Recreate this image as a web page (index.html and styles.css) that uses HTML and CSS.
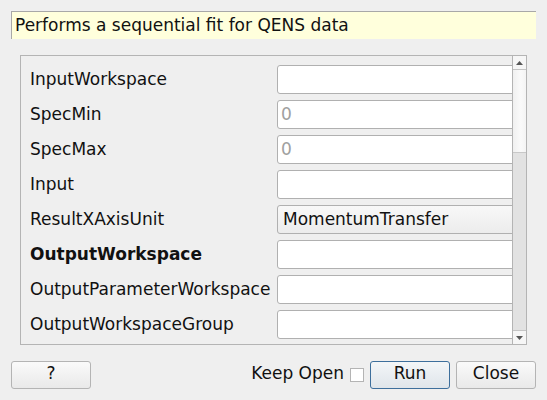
FILE: index.html
```html
<!DOCTYPE html>
<html>
<head>
<meta charset="utf-8">
<link rel="stylesheet" href="styles.css">
</head>
<body>
<div class="dialog">
  <div class="desc">Performs a sequential fit for QENS data</div>
  <div class="panel">
    <div class="rows">
      <div class="row"><span class="label">InputWorkspace</span><div class="field"></div></div>
      <div class="row"><span class="label">SpecMin</span><div class="field ph">0</div></div>
      <div class="row"><span class="label">SpecMax</span><div class="field ph">0</div></div>
      <div class="row"><span class="label">Input</span><div class="field"></div></div>
      <div class="row"><span class="label">ResultXAxisUnit</span><div class="field combo">MomentumTransfer</div></div>
      <div class="row"><span class="label bold">OutputWorkspace</span><div class="field"></div></div>
      <div class="row"><span class="label">OutputParameterWorkspace</span><div class="field"></div></div>
      <div class="row"><span class="label">OutputWorkspaceGroup</span><div class="field"></div></div>
    </div>
    <div class="scrollbar">
      <div class="arrow up"><svg width="7" height="4" viewBox="0 0 7 4"><polygon points="0,4 7,4 3.5,0" fill="#555"/></svg></div>
      <div class="handle"></div>
      <div class="trough"></div>
      <div class="arrow down"><svg width="7" height="4" viewBox="0 0 7 4"><polygon points="0,0 7,0 3.5,4" fill="#555"/></svg></div>
    </div>
  </div>
  <div class="buttons">
    <div class="btn">?</div>
    <div class="spacer"></div>
    <span class="keep">Keep Open</span>
    <div class="check"></div>
    <div class="btn default">Run</div>
    <div class="btn">Close</div>
  </div>
</div>
</body>
</html>
```
FILE: styles.css
```css
html, body {
  margin: 0;
  padding: 0;
  background: #efefef;
}
body {
  font-family: "DejaVu Sans", sans-serif;
  font-size: 17px;
  color: #111111;
  width: 547px;
  height: 400px;
  overflow: hidden;
}
.dialog {
  display: flex;
  flex-direction: column;
  padding: 11px 11px 0 11px;
}
.desc {
  height: 27px;
  line-height: 27px;
  padding-left: 3px;
  border-top: 1px solid #a8a8a8;
  border-left: 1px solid #a8a8a8;
  background: #ffffdc;
}
.panel {
  margin: 16px 9px 0 9px;
  height: 288px;
  border: 1px solid #b4b4b4;
  display: flex;
}
.rows {
  flex: 1;
  overflow: hidden;
  padding: 9px 0 0 9px;
  display: flex;
  flex-direction: column;
  gap: 7px;
}
.row {
  display: flex;
  align-items: center;
  height: 28px;
}
.label {
  width: 247px;
  flex: none;
  white-space: nowrap;
}
.bold { font-weight: bold; }
.field {
  flex: none;
  width: 260px;
  height: 27px;
  line-height: 27px;
  border: 1px solid #b0b0b0;
  border-radius: 3px;
  background: #ffffff;
  padding-left: 3px;
  box-sizing: content-box;
}
.ph { color: #a0a0a0; }
.combo {
  background: linear-gradient(#f8f8f8, #ececec);
  padding-left: 5px;
}
.scrollbar {
  width: 13px;
  flex: none;
  border-left: 1px solid #b4b4b4;
  display: flex;
  flex-direction: column;
}
.arrow {
  height: 13px;
  display: flex;
  align-items: center;
  justify-content: center;
  background: #f6f6f6;
}
.arrow.up { border-bottom: 1px solid #c4c4c4; }
.arrow.down { border-top: 1px solid #c4c4c4; }
.handle {
  height: 82px;
  background: linear-gradient(90deg, #f0f0f0, #fafafa 60%, #f4f4f4);
  border-bottom: 1px solid #c8c8c8;
}
.trough {
  flex: 1;
  background: #e2e2e2;
}
.buttons {
  display: flex;
  align-items: center;
  margin-top: 16px;
  height: 28px;
}
.spacer { flex: 1; }
.btn {
  width: 78px;
  height: 26px;
  line-height: 23px;
  padding-bottom: 0;
  box-sizing: content-box;
  text-align: center;
  border: 1px solid #b4b4b4;
  border-radius: 3px;
  background: linear-gradient(#fafafa, #e9e9e9);
}
.btn.default {
  border-color: #3d6f9c;
  background: linear-gradient(#f3f6f8, #dfe5ea);
  margin-right: 6px;
}
.keep {
  margin-right: 6px;
  line-height: 20px;
  margin-bottom: 4px;
}
.check {
  width: 12px;
  height: 12px;
  border: 1px solid #b4b4b4;
  background: #fff;
  margin-right: 6px;
}
```
